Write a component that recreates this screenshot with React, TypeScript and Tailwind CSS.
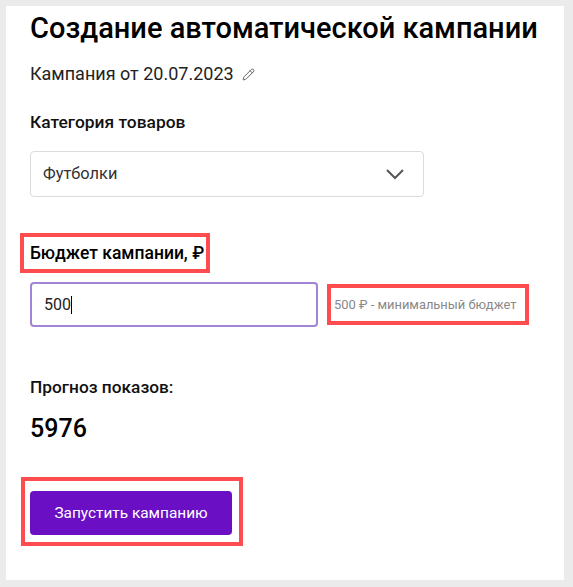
import { Pencil } from 'lucide-react'

export default function App() {
  return (
    <div className="h-[587px] w-[573px] overflow-hidden bg-[#ebebeb] pl-[6px] pt-[6px] font-['Roboto',sans-serif] text-[#111]">
      <div className="h-[574px] w-[558px] bg-white pl-[24px] pt-[2px]">
        <h1 className="whitespace-nowrap text-[29px] font-medium leading-[40px] text-black">
          Создание автоматической кампании
        </h1>

        <div className="mt-[14px] flex h-6 items-center gap-2 text-[18px] leading-6 text-[#222]">
          Кампания от 20.07.2023
          <Pencil className="h-[13px] w-[13px] text-[#444]" strokeWidth={1.5} />
        </div>

        <p className="mt-6 text-[17.4px] font-medium leading-6">Категория товаров</p>
        <div className="mt-[17px] flex h-[46px] w-[394px] items-center justify-between rounded border border-[#dcdcdc] pl-3 pr-[19px] text-[16.4px] text-[#333]">
          Футболки
          <svg width="18" height="11" viewBox="0 0 18 11" fill="none" stroke="#555" strokeWidth="2">
            <path d="M1 1l8 8 8-8" />
          </svg>
        </div>

        <div className="-ml-[10px] mt-9 flex h-10 w-[190px] items-center border-4 border-[#ff4d4f] pl-1.5">
          <p className="whitespace-nowrap text-[17.5px] font-medium leading-6 text-black">Бюджет кампании, ₽</p>
        </div>

        <div className="mt-[9px] flex items-center">
          <div className="flex h-[45px] w-[288px] items-center rounded border-2 border-[#a184d6] pl-3 text-base text-[#222]">
            500
            <span className="h-[18px] w-px bg-black" />
          </div>
          <div className="ml-[9px] flex h-[41px] w-[202px] items-center border-4 border-[#ff4d4f] pl-[3px] text-[12.9px] text-[#888]">
            <span className="whitespace-nowrap">500 ₽ - минимальный бюджет</span>
          </div>
        </div>

        <p className="mt-12 text-[17.3px] font-medium leading-6">Прогноз показов:</p>
        <p className="mt-[14px] text-[25px] font-medium leading-8 text-black">5976</p>

        <div className="-ml-[9px] mt-[32px] w-fit border-4 border-[#ff4d4f] pb-[7px] pl-[5px] pr-[7px] pt-[10px]">
          <button className="h-11 w-[202px] rounded bg-[#6a0fc4] pt-0.5 text-[15.4px] text-white">
            Запустить кампанию
          </button>
        </div>
      </div>
    </div>
  )
}
